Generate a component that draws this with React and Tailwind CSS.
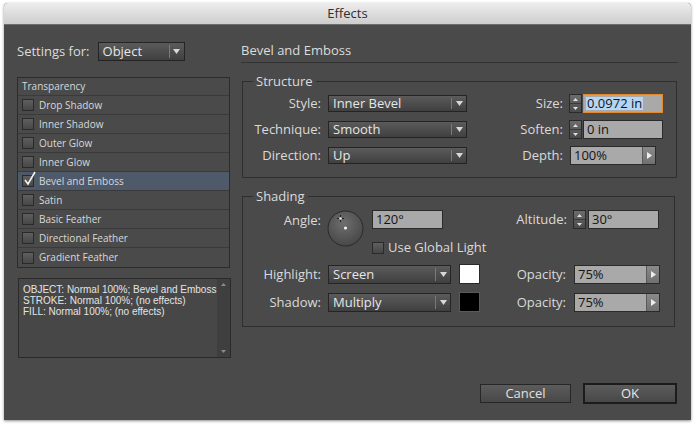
import React from "react";

function Arrow({ dir = "down", color = "#d8d8d8" }) {
  if (dir === "down")
    return (
      <svg width="7" height="5" viewBox="0 0 7 5">
        <path d="M0 0h7L3.5 5z" fill={color} />
      </svg>
    );
  if (dir === "up")
    return (
      <svg width="5" height="3" viewBox="0 0 5 3">
        <path d="M0 3h5L2.5 0z" fill={color} />
      </svg>
    );
  return (
    <svg width="5" height="7" viewBox="0 0 5 7">
      <path d="M0 0v7l5-3.5z" fill={color} />
    </svg>
  );
}

function Select({ value, className }) {
  return (
    <div
      className={`flex items-stretch border border-[#242424] bg-gradient-to-b from-[#5b5b5b] to-[#404040] text-[13px] text-[#e6e6e6] ${className}`}
    >
      <span className="flex flex-1 items-center pl-[4px] leading-none">{value}</span>
      <span className="my-[2px] w-px bg-[#7a7a7a]" />
      <span className="flex w-[14px] items-center justify-center">
        <Arrow />
      </span>
    </div>
  );
}

function Spinner() {
  return (
    <div className="flex h-[19px] w-[13px] flex-col border border-[#2a2a2a] bg-gradient-to-b from-[#6c6c6c] to-[#4a4a4a]">
      <div className="flex flex-1 items-center justify-center border-b border-[#3a3a3a]">
        <Arrow dir="up" color="#e0e0e0" />
      </div>
      <div className="flex flex-1 items-center justify-center">
        <svg width="5" height="3" viewBox="0 0 5 3">
          <path d="M0 0h5L2.5 3z" fill="#e0e0e0" />
        </svg>
      </div>
    </div>
  );
}

function Field({ value, className }) {
  return (
    <div
      className={`flex h-[19px] items-center border border-[#2a2a2a] bg-[#a9a9a9] pl-[3px] text-[13px] leading-none text-[#141414] ${className}`}
    >
      {value}
    </div>
  );
}

function Combo({ value, className }) {
  return (
    <div className={`flex h-[19px] border border-[#2a2a2a] ${className}`}>
      <div className="flex flex-1 items-center bg-[#a9a9a9] pl-[3px] text-[13px] leading-none text-[#141414]">
        {value}
      </div>
      <div className="flex w-[13px] items-center justify-center border-l border-[#5a5a5a] bg-gradient-to-b from-[#8a8a8a] to-[#707070]">
        <Arrow dir="right" color="#eeeeee" />
      </div>
    </div>
  );
}

function Check({ checked }) {
  return (
    <span className="relative block h-[12px] w-[12px] shrink-0 border border-[#2a2a2a] bg-gradient-to-b from-[#5f5f5f] to-[#474747]">
      {checked && (
        <svg
          className="absolute left-[1px] top-[-4px] overflow-visible"
          width="13"
          height="14"
          viewBox="0 0 13 14"
        >
          <path d="M1 8l3 4L11 0" fill="none" stroke="#f2f2f2" strokeWidth="1.6" />
        </svg>
      )}
    </span>
  );
}

const effects = [
  "Drop Shadow",
  "Inner Shadow",
  "Outer Glow",
  "Inner Glow",
  "Bevel and Emboss",
  "Satin",
  "Basic Feather",
  "Directional Feather",
  "Gradient Feather",
];

function Label({ children, className }) {
  return (
    <div className={`text-right text-[13px] leading-none text-[#dadada] ${className}`}>{children}</div>
  );
}

export default function App() {
  return (
    <div className="min-h-screen bg-white pl-[4px] pt-[3px] font-['Open_Sans','DejaVu_Sans',sans-serif]">
      <div className="flex h-[417px] w-[687px] flex-col overflow-hidden rounded-t-[4px] bg-[#4a4a4a] shadow-[0_1px_3px_rgba(0,0,0,0.45)]">
        {/* title bar */}
        <div className="flex h-[22px] shrink-0 items-center justify-center border-b border-[#6e6e6e] bg-gradient-to-b from-[#ededed] to-[#cdcdcd] text-[13px] text-[#2e2e2e]">
          Effects
        </div>

        <div className="flex flex-1 pl-[13px] pt-[17px]">
          {/* left column */}
          <div className="flex w-[214px] flex-col">
            <div className="flex h-[19px] items-center">
              <span className="text-[13px] leading-none text-[#dcdcdc]">Settings for:</span>
              <Select value="Object" className="ml-[8px] h-[19px] w-[87px]" />
            </div>

            <div className="mt-[16px] flex w-[213px] flex-col border border-[#2c2c2c] text-[10px] text-[#d8d8d8]">
              <div className="flex h-[18px] items-center border-b border-[#3a3a3a] pl-[4px]">
                Transparency
              </div>
              {effects.map((e, i) => (
                <div
                  key={e}
                  className={`flex h-[19px] items-center gap-[5px] pl-[4px] ${
                    i < effects.length - 1 ? "border-b border-[#3a3a3a]" : ""
                  } ${e === "Bevel and Emboss" ? "bg-[#4e5a6a]" : ""}`}
                >
                  <Check checked={e === "Bevel and Emboss"} />
                  <span>{e}</span>
                </div>
              ))}
            </div>

            <div className="ml-[1px] mt-[10px] flex h-[80px] w-[213px] border border-[#2a2a2a] bg-[#474747]">
              <div className="flex-1 whitespace-nowrap pl-[4px] pt-[5px] font-['Liberation_Sans',sans-serif] text-[10px] leading-[11px] text-[#e4e4e4]">
                <div>OBJECT: Normal 100%; Bevel and Emboss</div>
                <div>STROKE: Normal 100%; (no effects)</div>
                <div>FILL: Normal 100%; (no effects)</div>
              </div>
              <div className="flex w-[13px] shrink-0 flex-col items-center justify-between bg-[#3f3f3f] py-[4px]">
                <Arrow dir="up" color="#8a8a8a" />
                <svg width="5" height="3" viewBox="0 0 5 3">
                  <path d="M0 0h5L2.5 3z" fill="#8a8a8a" />
                </svg>
              </div>
            </div>
          </div>

          {/* right column */}
          <div className="ml-[10px] flex w-[437px] flex-col">
            <div className="flex h-[21px] items-center border-b border-[#333] pb-[2px] text-[13px] text-[#dcdcdc]">
              Bevel and Emboss
            </div>

            {/* Structure */}
            <div className="relative ml-[1px] mt-[18px] w-[435px] border border-[#2e2e2e] pb-[13px] pt-[13px]">
              <span className="absolute left-[10px] top-[-9px] bg-[#4a4a4a] px-[3px] text-[13px] leading-[16px] text-[#dcdcdc]">
                Structure
              </span>
              <div className="flex flex-col gap-[9px]">
                <div className="flex h-[17px] items-center">
                  <Label className="w-[78px]">Style:</Label>
                  <Select value="Inner Bevel" className="ml-[7px] h-[17px] w-[139px]" />
                  <Label className="w-[96px]">Size:</Label>
                  <div className="ml-[6px]">
                    <Spinner />
                  </div>
                  <div className="ml-px flex h-[19px] w-[80px] items-center border border-[#e48a2a] bg-[#a9a9a9] pl-[2px] text-[13px] leading-none text-[#141414]">
                    <span className="bg-[#b6d6f6] px-px">0.0972 in</span>
                  </div>
                </div>
                <div className="flex h-[17px] items-center">
                  <Label className="w-[78px]">Technique:</Label>
                  <Select value="Smooth" className="ml-[7px] h-[17px] w-[139px]" />
                  <Label className="w-[96px]">Soften:</Label>
                  <div className="ml-[6px]">
                    <Spinner />
                  </div>
                  <Field value="0 in" className="ml-px w-[80px]" />
                </div>
                <div className="flex h-[17px] items-center">
                  <Label className="w-[78px]">Direction:</Label>
                  <Select value="Up" className="ml-[7px] h-[17px] w-[139px]" />
                  <Label className="w-[96px]">Depth:</Label>
                  <Combo value="100%" className="ml-[7px] w-[86px]" />
                </div>
              </div>
            </div>

            {/* Shading */}
            <div className="relative ml-[1px] mt-[18px] w-[433px] border border-[#2e2e2e] pb-[14px] pt-[13px]">
              <span className="absolute left-[10px] top-[-9px] bg-[#4a4a4a] px-[3px] text-[13px] leading-[16px] text-[#dcdcdc]">
                Shading
              </span>
              <div className="flex">
                <Label className="mt-[4px] w-[78px]">Angle:</Label>
                <svg className="ml-[6px]" width="37" height="37" viewBox="0 0 37 37">
                  <defs>
                    <radialGradient id="dial" cx="45%" cy="35%" r="70%">
                      <stop offset="0" stopColor="#6e6e6e" />
                      <stop offset="1" stopColor="#454545" />
                    </radialGradient>
                  </defs>
                  <circle cx="18.5" cy="18.5" r="17.5" fill="url(#dial)" stroke="#2a2a2a" />
                  <path d="M13.5 5v7M10 8.5h7" stroke="#1e1e1e" strokeWidth="1" />
                  <circle cx="13.5" cy="8.5" r="1.3" fill="#f0f0f0" />
                  <circle cx="18.5" cy="18" r="1.6" fill="#f4f4f4" />
                </svg>
                <div className="ml-[8px] flex flex-1 flex-col pr-[15px]">
                  <div className="flex items-center">
                    <Field value="120°" className="h-[18px] w-[71px]" />
                    <div className="flex-1" />
                    <Label>Altitude:</Label>
                    <div className="ml-[6px]">
                      <Spinner />
                    </div>
                    <Field value="30°" className="ml-[2px] w-[71px]" />
                  </div>
                  <div className="mt-[12px] flex items-center gap-[4px]">
                    <Check />
                    <span className="text-[13px] leading-none text-[#dadada]">Use Global Light</span>
                  </div>
                </div>
              </div>

              <div className="mt-[10px] flex items-center pr-[14px]">
                <Label className="w-[78px]">Highlight:</Label>
                <Select value="Screen" className="ml-[7px] h-[19px] w-[123px]" />
                <span className="ml-[8px] h-[20px] w-[21px] border border-[#2a2a2a] bg-white" />
                <div className="flex-1" />
                <Label>Opacity:</Label>
                <Combo value="75%" className="ml-[8px] w-[86px]" />
              </div>
              <div className="mt-[8px] flex items-center pr-[14px]">
                <Label className="w-[78px]">Shadow:</Label>
                <Select value="Multiply" className="ml-[7px] h-[19px] w-[123px]" />
                <span className="ml-[8px] h-[20px] w-[21px] border border-[#5a5a5a] bg-black" />
                <div className="flex-1" />
                <Label>Opacity:</Label>
                <Combo value="75%" className="ml-[8px] w-[86px]" />
              </div>
            </div>

            {/* buttons */}
            <div className="mt-[56px] flex items-center justify-end gap-[12px] pr-[1px]">
              <button className="h-[19px] w-[91px] border border-[#262626] bg-gradient-to-b from-[#5c5c5c] to-[#484848] text-[13px] leading-none text-[#e0e0e0]">
                Cancel
              </button>
              <button className="h-[21px] w-[94px] border-2 border-[#1c1c1c] bg-gradient-to-b from-[#5c5c5c] to-[#484848] text-[13px] leading-none text-[#e8e8e8]">
                OK
              </button>
            </div>
          </div>
        </div>
      </div>
    </div>
  );
}
